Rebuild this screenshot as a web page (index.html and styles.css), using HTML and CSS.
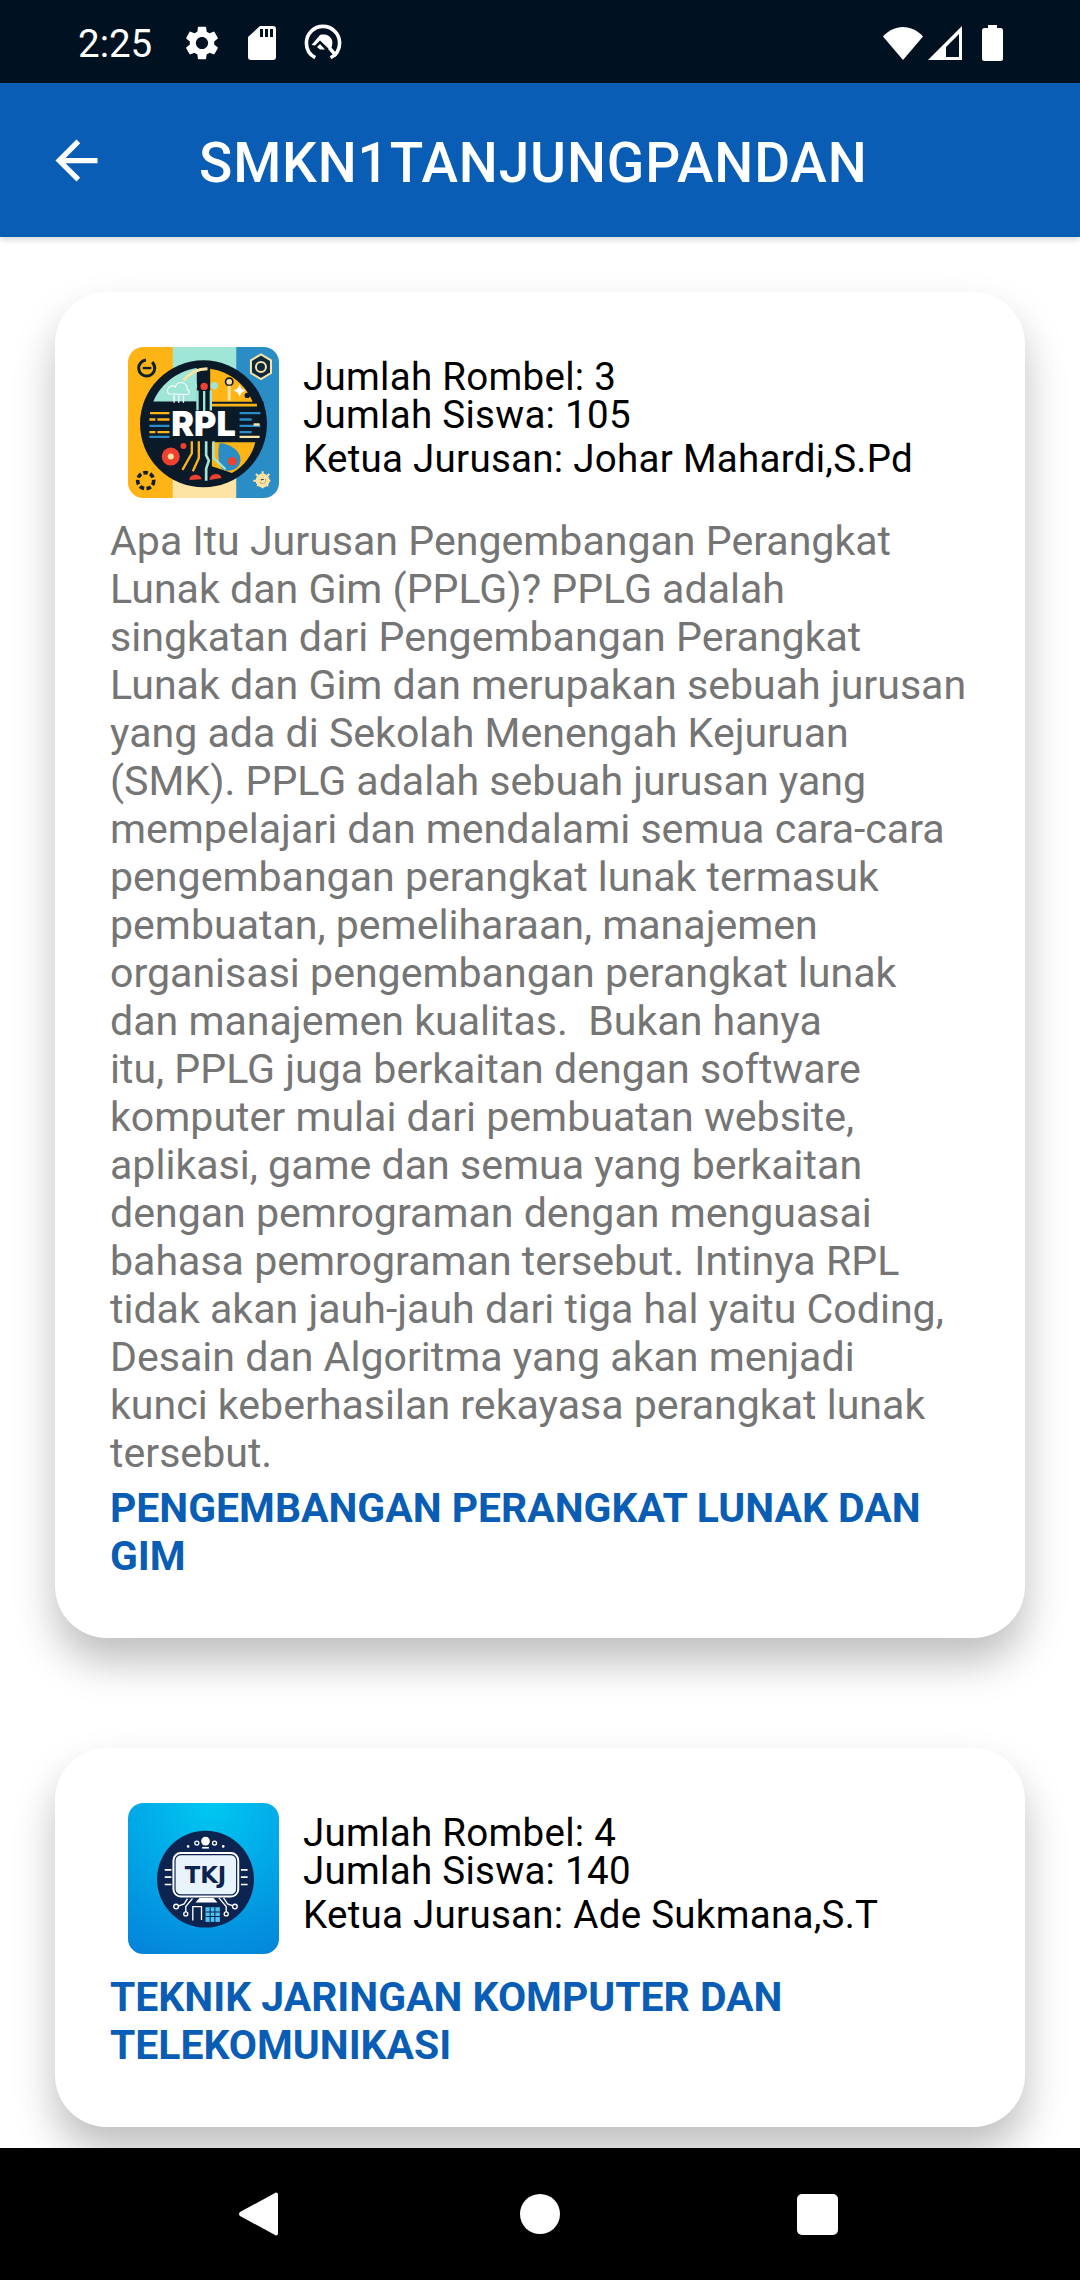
FILE: index.html
```html
<!DOCTYPE html>
<html lang="en">
<head>
    <meta charset="UTF-8">
    <meta name="viewport" content="width=device-width, initial-scale=1.0">
    <title>SMKN1TANJUNGPANDAN</title>
    <link rel="stylesheet" href="styles.css">
</head>
<body>
    <div class="phone">
        <div class="status-bar">
            <span class="clock">2:25</span>
            <svg class="st-gear" viewBox="2 2 20 20"><path fill="#fff" d="M19.14 12.94c.04-.3.06-.61.06-.94 0-.32-.02-.64-.07-.94l2.03-1.58a.49.49 0 0 0 .12-.61l-1.92-3.32a.488.488 0 0 0-.59-.22l-2.39.96c-.5-.38-1.03-.7-1.62-.94l-.36-2.54a.484.484 0 0 0-.48-.41h-3.84c-.24 0-.43.17-.47.41l-.36 2.54c-.59.24-1.13.57-1.62.94l-2.39-.96c-.22-.08-.47 0-.59.22L2.74 8.87c-.12.21-.08.47.12.61l2.03 1.58c-.05.3-.09.63-.09.94s.02.64.07.94l-2.03 1.58a.49.49 0 0 0-.12.61l1.92 3.32c.12.22.37.29.59.22l2.39-.96c.5.38 1.03.7 1.62.94l.36 2.54c.05.24.24.41.48.41h3.84c.24 0 .44-.17.47-.41l.36-2.54c.59-.24 1.13-.56 1.62-.94l2.39.96c.22.08.47 0 .59-.22l1.92-3.32c.12-.22.07-.47-.12-.61l-2.01-1.58zM12 15.6c-1.98 0-3.6-1.62-3.6-3.6s1.62-3.6 3.6-3.6 3.6 1.62 3.6 3.6-1.62 3.6-3.6 3.6z"/></svg>
            <svg class="st-sd" viewBox="0 0 28 34"><path fill="#fff" fill-rule="evenodd" d="M12 0h13a3 3 0 0 1 3 3v28a3 3 0 0 1-3 3H3a3 3 0 0 1-3-3V11zM12 3v8h3V3zM17 3v8h3V3zM22 3v8h3V3z"/></svg>
            <svg class="st-q" viewBox="0 0 38 38"><circle cx="19" cy="19" r="16.6" fill="none" stroke="#fff" stroke-width="3.6" stroke-dasharray="88 16" stroke-dashoffset="-34"/><path fill="#fff" d="M7.500 21L16 11c5 -1.500 10.500 .5 12 5 .6 2.500 .4 5-.5 7.500l-2 2L16 16.500 11 21.500z"/><path fill="#fff" d="M13 23l3-3 5 5.500h-5z"/><path fill="#fff" d="M24 25l2.500-2.500 7 8-2.500 2.500z"/></svg>
            <span class="spacer"></span>
            <svg class="st-wifi" viewBox="0 0 40 33"><path fill="#fff" d="M20 33L0 9.500C5.500 3.500 12.500 0 20 0s14.500 3.500 20 9.500z"/></svg>
            <svg class="st-signal" viewBox="0 0 34 34"><path fill="#fff" fill-rule="evenodd" d="M34 0v34H0zM31 8L18 21v10h13z"/></svg>
            <svg class="st-battery" viewBox="0 0 21 36"><path fill="#fff" d="M6 0h9v3h3.500A2.500 2.500 0 0 1 21 5.500V33.500A2.500 2.500 0 0 1 18.500 36h-16A2.500 2.500 0 0 1 0 33.500V5.500A2.500 2.500 0 0 1 2.500 3H6z"/></svg>
        </div>

        <header class="app-bar">
            <svg class="back-icon" viewBox="0 0 24 24"><path fill="#fff" d="M20 11H7.830l5.590-5.590L12 4l-8 8 8 8 1.410-1.410L7.830 13H20v-2z"/></svg>
            <h1>SMKN1TANJUNGPANDAN</h1>
        </header>

        <main class="content">
            <section class="card">
                <div class="card-head">
                    <svg class="logo" viewBox="84 80 452 452">
                        <defs><clipPath id="rplClip"><rect x="84" y="80" width="452" height="452" rx="46"/></clipPath></defs>
                        <g clip-path="url(#rplClip)">
                            <rect x="84" y="80" width="135" height="452" fill="#fdb414"/>
                            <rect x="218" y="80" width="191" height="452" fill="#9fe6d6"/>
                            <rect x="218" y="310" width="191" height="222" fill="#fde4a4"/>
                            <rect x="408" y="80" width="128" height="452" fill="#2a8dc5"/>
                        </g>
                        <circle cx="140" cy="143" r="24" fill="none" stroke="#10202c" stroke-width="9" stroke-dasharray="110 20"/>
                        <path d="M128 143h26" stroke="#10202c" stroke-width="7"/>
                        <path d="M482 102l30 18v38l-30 18-30-18v-38z" fill="#0d2a3c" stroke="#fde4a4" stroke-width="6"/>
                        <circle cx="482" cy="140" r="15" fill="none" stroke="#fde4a4" stroke-width="6"/>
                        <circle cx="137" cy="480" r="24" fill="none" stroke="#10202c" stroke-width="11" stroke-dasharray="14 7"/>
                        <circle cx="487" cy="480" r="21" fill="#fde4a4"/>
                        <circle cx="487" cy="480" r="9" fill="#10202c"/>
                        <path d="M487 452v56M459 480h56M467 460l40 40M507 460l-40 40" stroke="#fde4a4" stroke-width="6" stroke-dasharray="9 5"/>

                        <circle cx="310" cy="310" r="190" fill="#0b1a28"/>
                        <path d="M330 145c60 8 110 50 130 107H330z" fill="#fdb414"/>
                        <path d="M290 143c-65 10-112 55-130 100h130z" fill="#9fe6d6"/>
                        <path d="M218 250h272" stroke="#0b1a28" stroke-width="12"/>
                        <path d="M335 254h135" stroke="#fdb414" stroke-width="8"/>
                        <path d="M250 180c20-25 45-35 72-35" fill="none" stroke="#fde4a4" stroke-width="9"/>
                        <path d="M205 220c-10-20 12-28 20-20 8-22 38-16 36 8 12 4 6 14 0 14z" fill="#9fe6d6" stroke="#fff" stroke-width="3"/>
                        <path d="M222 225v22M236 225v22M250 225v22" stroke="#fff" stroke-width="4"/>
                        <circle cx="280" cy="196" r="11" fill="#9fe6d6"/>
                        <circle cx="312" cy="198" r="11" fill="#ef4130"/>
                        <circle cx="342" cy="196" r="11" fill="#9fe6d6"/>
                        <path d="M292 210v60M312 212v60M332 210v60" stroke="#9fe6d6" stroke-width="7"/>
                        <circle cx="387" cy="184" r="11" fill="#fde4a4" stroke="#0b1a28" stroke-width="5"/>
                        <path d="M387 196v45" stroke="#fde4a4" stroke-width="9"/>
                        <path d="M418 192l6 12 12 6-12 6-6 12-6-12-12-6 12-6z" fill="#fff"/>
                        <circle cx="441" cy="225" r="8" fill="#0b1a28"/>

                        <path d="M150 278h58M148 297h18M172 297h36M148 335h18M172 335h36" stroke="#fdb414" stroke-width="7"/>
                        <path d="M148 316h60M148 349h60" stroke="#2a8dc5" stroke-width="7"/>
                        <path d="M418 278h62M418 297h36M418 316h62M418 335h36" stroke="#2a8dc5" stroke-width="7"/>
                        <path d="M418 349h60M460 312h18" stroke="#fde4a4" stroke-width="7"/>
                        <text class="logo-rpl" x="310" y="346" text-anchor="middle">RPL</text>

                        <path d="M335 365h130c-8 35-32 72-70 92l-60-20z" fill="#fdb414"/>
                        <path d="M358 368c30 0 68 24 62 56-6 24-34 30-50 24-14-8-20-50-12-80z" fill="#2a8dc5"/>
                        <circle cx="396" cy="422" r="13" fill="#ef4130"/>
                        <circle cx="212" cy="408" r="27" fill="#ef4130"/>
                        <circle cx="212" cy="408" r="9" fill="#fde4a4"/>
                        <circle cx="250" cy="376" r="9" fill="#ef4130"/>
                        <path d="M275 362v36l-28 50M296 362v50l-18 40" fill="none" stroke="#fdb414" stroke-width="7"/>
                        <path d="M318 362v42l8 16-8 24v36" fill="none" stroke="#9fe6d6" stroke-width="8"/>
                        <path d="M340 362v50l36 34" fill="none" stroke="#9fe6d6" stroke-width="7"/>
                        <path d="M268 478c0-20 34-20 36-2z" fill="#ef4130"/>
                        <path d="M328 478c0-22 34-24 36-6z" fill="#ef4130"/>
                    </svg>
                    <div class="info">
                        <p class="info-line">Jumlah Rombel: 3</p>
                        <p class="info-line">Jumlah Siswa: 105</p>
                        <p class="info-line lead">Ketua Jurusan: Johar Mahardi,S.Pd</p>
                    </div>
                </div>
                <p class="desc">Apa Itu Jurusan Pengembangan Perangkat Lunak dan Gim (PPLG)? PPLG adalah singkatan dari Pengembangan Perangkat Lunak dan Gim dan merupakan sebuah jurusan yang ada di Sekolah Menengah Kejuruan (SMK). PPLG adalah sebuah jurusan yang mempelajari dan mendalami semua cara-cara pengembangan perangkat lunak termasuk pembuatan, pemeliharaan, manajemen organisasi pengembangan perangkat lunak dan manajemen kualitas.&nbsp; Bukan hanya itu,&nbsp;PPLG juga berkaitan dengan software komputer mulai dari pembuatan website, aplikasi, game dan semua yang berkaitan dengan pemrograman dengan menguasai bahasa pemrograman tersebut. Intinya RPL tidak akan jauh-jauh dari tiga hal yaitu Coding, Desain dan Algoritma yang akan menjadi<br>kunci keberhasilan rekayasa perangkat lunak tersebut.</p>
                <h2 class="major">PENGEMBANGAN PERANGKAT LUNAK DAN GIM</h2>
            </section>

            <section class="card">
                <div class="card-head">
                    <svg class="logo" viewBox="84 68 452 452">
                        <defs><radialGradient id="tkjBg" cx="0.55" cy="0" r="1.1"><stop offset="0" stop-color="#00c8f2"/><stop offset="1" stop-color="#0484da"/></radialGradient></defs>
                        <rect x="84" y="68" width="452" height="452" rx="46" fill="url(#tkjBg)"/>
                        <circle cx="316" cy="296" r="145" fill="#0d2350"/>
                        <rect x="224" y="222" width="186" height="122" rx="18" fill="#e9f3fb" stroke="#0d2350" stroke-width="5"/>
                        <rect x="220" y="218" width="194" height="130" rx="22" fill="none" stroke="#fff" stroke-width="6"/>
                        <text class="logo-tkj" x="316" y="306" text-anchor="middle">TKJ</text>
                        <circle cx="316" cy="182" r="13" fill="#fff"/>
                        <path d="M306 202h20" stroke="#fff" stroke-width="5"/>
                        <circle cx="290" cy="188" r="6" fill="none" stroke="#fff" stroke-width="4"/>
                        <circle cx="343" cy="188" r="6" fill="none" stroke="#fff" stroke-width="4"/>
                        <circle cx="264" cy="198" r="4" fill="#fff"/>
                        <circle cx="369" cy="198" r="4" fill="#fff"/>
                        <path d="M194 268h20M194 290h20M194 312h20M422 268h20M422 290h20M422 312h20" stroke="#fff" stroke-width="5"/>
                        <path d="M298 352h42l12 14h-66z" fill="#fff"/>
                        <path d="M230 378l22-8 10-16M257 400v-22l20-24M378 400v-22l-22-26M404 378l-22-8-12-18" fill="none" stroke="#fff" stroke-width="4"/>
                        <circle cx="228" cy="378" r="7" fill="#0d2350" stroke="#fff" stroke-width="4"/>
                        <circle cx="257" cy="400" r="6" fill="#0d2350" stroke="#fff" stroke-width="4"/>
                        <circle cx="378" cy="400" r="6" fill="#0d2350" stroke="#fff" stroke-width="4"/>
                        <circle cx="404" cy="378" r="7" fill="#0d2350" stroke="#fff" stroke-width="4"/>
                        <path d="M278 420v-42h26v40" fill="none" stroke="#fff" stroke-width="4"/>
                        <rect x="316" y="380" width="43" height="44" fill="#4cc0ee"/>
                        <path d="M316 394h43M316 408h43M330 380v44M344 380v44" stroke="#0d2350" stroke-width="3"/>
                    </svg>
                    <div class="info">
                        <p class="info-line">Jumlah Rombel: 4</p>
                        <p class="info-line">Jumlah Siswa: 140</p>
                        <p class="info-line lead">Ketua Jurusan: Ade Sukmana,S.T</p>
                    </div>
                </div>
                <h2 class="major">TEKNIK JARINGAN KOMPUTER DAN TELEKOMUNIKASI</h2>
            </section>
        </main>

        <nav class="nav-bar">
            <svg class="nav-back" viewBox="0 0 39 44"><path fill="#fff" d="M37 0.500c1 0 2 .8 2 2v39c0 1.200-1 2-2 2-.6 0-1-.2-1.400-.7L1 24c-1.300-1.200-1.300-2.800 0-4L35.600 1.200c.4-.5.800-.7 1.400-.7z"/></svg>
            <span class="nav-home"></span>
            <span class="nav-square"></span>
        </nav>
    </div>
</body>
</html>
```

FILE: styles.css
```css
* {
    box-sizing: border-box;
}
body {
    margin: 0;
    font-family: Roboto, sans-serif;
    background: #000;
}
.phone {
    width: 1080px;
    height: 2280px;
    display: flex;
    flex-direction: column;
    overflow: hidden;
    background: #fff;
}
.status-bar {
    height: 83px;
    flex: none;
    background: #001122;
    display: flex;
    align-items: center;
    padding: 3px 77px 0 78px;
}
.clock {
    color: #fff;
    font-size: 38.500px;
    margin-right: 33px;
}
.st-gear {
    width: 34px;
    height: 34px;
    margin-right: 29px;
}
.st-sd {
    width: 28px;
    height: 34px;
    margin-right: 28px;
}
.st-q {
    width: 38px;
    height: 38px;
}
.spacer {
    flex: 1;
}
.st-wifi {
    width: 40px;
    height: 33px;
    margin-right: 5px;
}
.st-signal {
    width: 34px;
    height: 34px;
    margin-right: 20px;
}
.st-battery {
    width: 21px;
    height: 36px;
}
.app-bar {
    height: 154px;
    flex: none;
    background: #0a5db5;
    display: flex;
    align-items: center;
    padding-left: 45px;
    position: relative;
    box-shadow: 0 3px 6px rgba(0,0,0,0.15);
}
.back-icon {
    width: 63px;
    height: 63px;
    margin-right: 91px;
}
.app-bar h1 {
    margin: 5px 0 0;
    color: #fff;
    font-size: 55px;
    font-weight: 500;
    letter-spacing: 0.850px;
}
.content {
    flex: 1;
    min-height: 0;
    overflow: hidden;
    padding: 55px 55px 0;
}
.card {
    background: #fff;
    border-radius: 52px;
    padding: 55px 55px 58px;
    margin-bottom: 110px;
    box-shadow: 0 24px 40px rgba(0,0,0,0.25);
}
.card-head {
    display: flex;
    align-items: flex-start;
    padding-left: 18px;
    margin-bottom: 19px;
}
.logo {
    width: 151px;
    height: 151px;
    margin-right: 24px;
    flex: none;
}
.logo-rpl {
    font-family: Inter, Roboto, sans-serif;
    font-weight: 900;
    font-size: 102px;
    fill: #fff;
}
.logo-tkj {
    font-family: "DejaVu Sans", Roboto, sans-serif;
    font-weight: 700;
    font-size: 68px;
    fill: #0d2350;
}
.info {
    color: #000;
    font-size: 38.500px;
    letter-spacing: 0.280px;
    padding-top: 11px;
}
.info-line {
    margin: 0;
    line-height: 38px;
}
.info-line.lead {
    margin-top: 6px;
}
.desc {
    margin: 0 0 7px;
    color: #757575;
    font-size: 41.100px;
    line-height: 48px;
}
.major {
    margin: 0;
    color: #0a5db5;
    font-size: 40.900px;
    font-weight: 700;
    line-height: 48px;
}
.nav-bar {
    height: 132px;
    flex: none;
    background: #000;
    position: relative;
}
.nav-back {
    position: absolute;
    left: 239px;
    top: 44px;
    width: 39px;
    height: 44px;
}
.nav-home {
    position: absolute;
    left: 520px;
    top: 46px;
    width: 40px;
    height: 40px;
    border-radius: 50%;
    background: #fff;
}
.nav-square {
    position: absolute;
    left: 797px;
    top: 46px;
    width: 41px;
    height: 41px;
    border-radius: 5px;
    background: #fff;
}
```
